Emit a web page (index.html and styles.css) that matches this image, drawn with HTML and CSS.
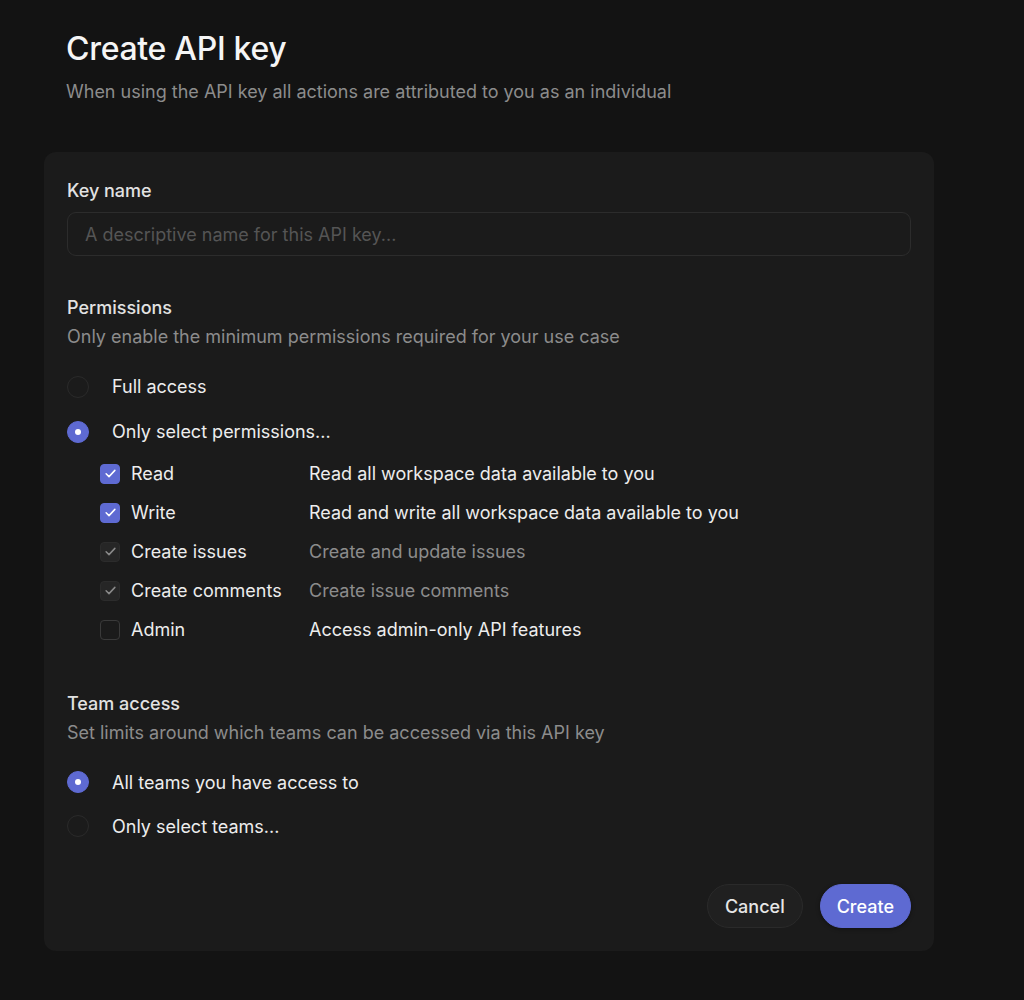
FILE: index.html
```html
<!DOCTYPE html>
<html lang="en">
<head>
    <meta charset="UTF-8">
    <title>Create API key</title>
    <link rel="stylesheet" href="styles.css">
</head>
<body>
    <div class="page">
        <h1 class="title">Create API key</h1>
        <p class="subtitle">When using the API key all actions are attributed to you as an individual</p>

        <div class="card">
            <div class="field">
                <label class="label">Key name</label>
                <input class="input" type="text" placeholder="A descriptive name for this API key...">
            </div>

            <div class="section">
                <div class="section-title">Permissions</div>
                <div class="section-desc">Only enable the minimum permissions required for your use case</div>

                <div class="radio-row"><span class="radio"></span>Full access</div>
                <div class="radio-row"><span class="radio on"></span>Only select permissions...</div>

                <div class="perms">
                    <div class="perm"><span class="check on"><svg viewBox="0 0 12 12"><path d="M2.5 6.2l2.3 2.3 4.7-5"/></svg></span><span class="perm-name">Read</span><span class="perm-desc">Read all workspace data available to you</span></div>
                    <div class="perm"><span class="check on"><svg viewBox="0 0 12 12"><path d="M2.5 6.2l2.3 2.3 4.7-5"/></svg></span><span class="perm-name">Write</span><span class="perm-desc">Read and write all workspace data available to you</span></div>
                    <div class="perm"><span class="check dim"><svg viewBox="0 0 12 12"><path d="M2.5 6.2l2.3 2.3 4.7-5"/></svg></span><span class="perm-name">Create issues</span><span class="perm-desc muted">Create and update issues</span></div>
                    <div class="perm"><span class="check dim"><svg viewBox="0 0 12 12"><path d="M2.5 6.2l2.3 2.3 4.7-5"/></svg></span><span class="perm-name">Create comments</span><span class="perm-desc muted">Create issue comments</span></div>
                    <div class="perm"><span class="check"></span><span class="perm-name">Admin</span><span class="perm-desc">Access admin-only API features</span></div>
                </div>
            </div>

            <div class="section teams">
                <div class="section-title">Team access</div>
                <div class="section-desc">Set limits around which teams can be accessed via this API key</div>

                <div class="radio-row"><span class="radio on"></span>All teams you have access to</div>
                <div class="radio-row"><span class="radio"></span>Only select teams...</div>
            </div>

            <div class="actions">
                <button class="btn">Cancel</button>
                <button class="btn primary">Create</button>
            </div>
        </div>
    </div>
</body>
</html>
```

FILE: styles.css
```css
body { margin: 0; background: #131313; color: #e6e6e6; font-family: Inter, 'Noto Sans', sans-serif; }
.page { width: 890px; padding: 28px 0 49px 44px; }
.title { margin: 0 0 0 22px; font-size: 32px; font-weight: 500; color: #f5f5f5; letter-spacing: -0.3px; line-height: 42px; }
.subtitle { margin: 10px 0 0 22px; font-size: 18px; color: #8c8c8c; line-height: 24px; }

.card { margin-top: 48px; background: #1b1b1b; border-radius: 12px; padding: 27px 23px 23px; }
.label { display: block; font-size: 18px; font-weight: 500; color: #e2e2e2; line-height: 24px; }
.input { box-sizing: border-box; width: 100%; height: 44px; margin-top: 9px; background: #1b1b1b; border: 1px solid #2c2c2c; border-radius: 9px; padding: 0 17px; font: 18px Inter, sans-serif; color: #e6e6e6; outline: none; }
.input::placeholder { color: #555; }

.section { margin-top: 40px; }
.section + .section { margin-top: 43px; }
.section-title { font-size: 18px; font-weight: 500; color: #e2e2e2; line-height: 24px; }
.section-desc { margin-top: 5px; font-size: 18px; color: #8c8c8c; line-height: 24px; }

.radio-row { display: flex; align-items: center; height: 45px; font-size: 18px; color: #ededed; }
.teams .radio-row { height: 44px; }
.section-desc + .radio-row { margin-top: 15px; }
.radio { box-sizing: border-box; width: 22px; height: 22px; border-radius: 50%; border: 1px solid #2a2a2a; margin-right: 23px; display: flex; align-items: center; justify-content: center; }
.radio.on { background: #5e6ad2; border-color: #5e6ad2; }
.radio.on::after { content: ''; width: 6px; height: 6px; border-radius: 50%; background: #fff; }

.perms { padding: 0 0 0 33px; }
.perm { display: flex; align-items: center; height: 39px; font-size: 18px; color: #ededed; }
.check { box-sizing: border-box; width: 20px; height: 20px; border-radius: 4px; border: 1px solid #3a3a3a; margin-right: 11px; display: flex; align-items: center; justify-content: center; }
.check svg { width: 15px; height: 15px; fill: none; stroke: #fff; stroke-width: 1.2; stroke-linecap: round; stroke-linejoin: round; }
.check.on { background: #5e6ad2; border-color: #5e6ad2; }
.check.dim { background: #262626; border-color: #2c2c2c; }
.check.dim svg { stroke: #8a8a8a; }
.perm-name { width: 178px; }
.perm-desc { color: #ededed; }
.perm-desc.muted { color: #8c8c8c; }

.actions { display: flex; justify-content: flex-end; gap: 17px; margin-top: 36px; }
.btn { height: 44px; padding: 0 17px; border-radius: 22px; border: 1px solid #2a2a2a; background: #202020; color: #e6e6e6; font: 500 18px Inter, sans-serif; }
.btn.primary { padding: 0 16px; background: #5e6ad2; border-color: #5e6ad2; color: #fff; box-shadow: 0 1px 4px rgba(0,0,0,0.4); }
```
